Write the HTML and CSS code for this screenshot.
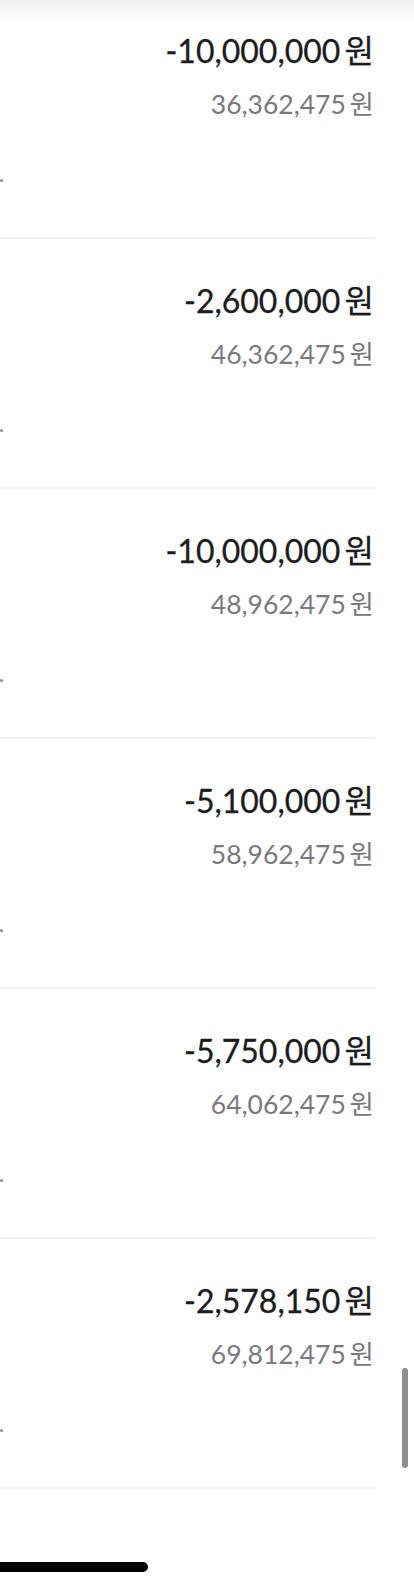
FILE: index.html
```html
<!DOCTYPE html>
<html lang="ko">
	<head>
		<meta charset="utf-8"/>
		<title>거래 내역</title>
		<link rel="stylesheet" href="styles.css">
	</head>
	<body>
		<div class="top-shade"></div>
		<ul class="tx-list">
			<li class="tx-row">
				<p class="amount">-10,000,000 원</p>
				<p class="balance">36,362,475 원</p>
				<span class="memo"></span>
			</li>
			<li class="tx-row">
				<p class="amount">-2,600,000 원</p>
				<p class="balance">46,362,475 원</p>
				<span class="memo"></span>
			</li>
			<li class="tx-row">
				<p class="amount">-10,000,000 원</p>
				<p class="balance">48,962,475 원</p>
				<span class="memo"></span>
			</li>
			<li class="tx-row">
				<p class="amount">-5,100,000 원</p>
				<p class="balance">58,962,475 원</p>
				<span class="memo"></span>
			</li>
			<li class="tx-row">
				<p class="amount">-5,750,000 원</p>
				<p class="balance">64,062,475 원</p>
				<span class="memo"></span>
			</li>
			<li class="tx-row">
				<p class="amount">-2,578,150 원</p>
				<p class="balance">69,812,475 원</p>
				<span class="memo"></span>
			</li>
		</ul>
		<div class="scroll-thumb"></div>
		<div class="home-bar"></div>
	</body>
</html>
```

FILE: styles.css
```css
*{margin:0;padding:0;box-sizing:border-box;list-style-type:none;}
html,body
{
	width:414px;
	height:1587px;
	overflow:hidden;
	background:#ffffff;
}
body
{
	position:relative;
	font-family:"Lato","Noto Sans CJK KR",sans-serif;
}
.top-shade
{
	position:absolute;
	top:0;
	left:0;
	width:100%;
	height:24px;
	background:linear-gradient(#f2f2f2,#ffffff);
	z-index:2;
}
.tx-list
{
	width:375px;
	margin-top:-11px;
}
.tx-row
{
	height:250px;
	padding-top:44px;
	padding-right:1px;
	border-bottom:2px solid #f1f1f1;
	display:flex;
	flex-direction:column;
	align-items:flex-end;
}
.amount
{
	font-size:32px;
	line-height:36px;
	word-spacing:-4px;
	color:#1c1c1e;
	-webkit-text-stroke:0.3px #1c1c1e;
}
.balance
{
	margin-top:20px;
	font-size:26.5px;
	line-height:30px;
	word-spacing:-3px;
	color:#7a7a7e;
}
.memo
{
	align-self:flex-start;
	margin-top:60px;
	width:3px;
	height:3px;
	border-radius:50%;
	background:#8a8a8a;
}
.scroll-thumb
{
	position:absolute;
	right:6px;
	top:1368px;
	width:6px;
	height:100px;
	border-radius:3px;
	background:#8e8e8e;
}
.home-bar
{
	position:absolute;
	left:-10px;
	top:1562px;
	width:158px;
	height:10px;
	border-radius:5px;
	background:#000000;
}
```
